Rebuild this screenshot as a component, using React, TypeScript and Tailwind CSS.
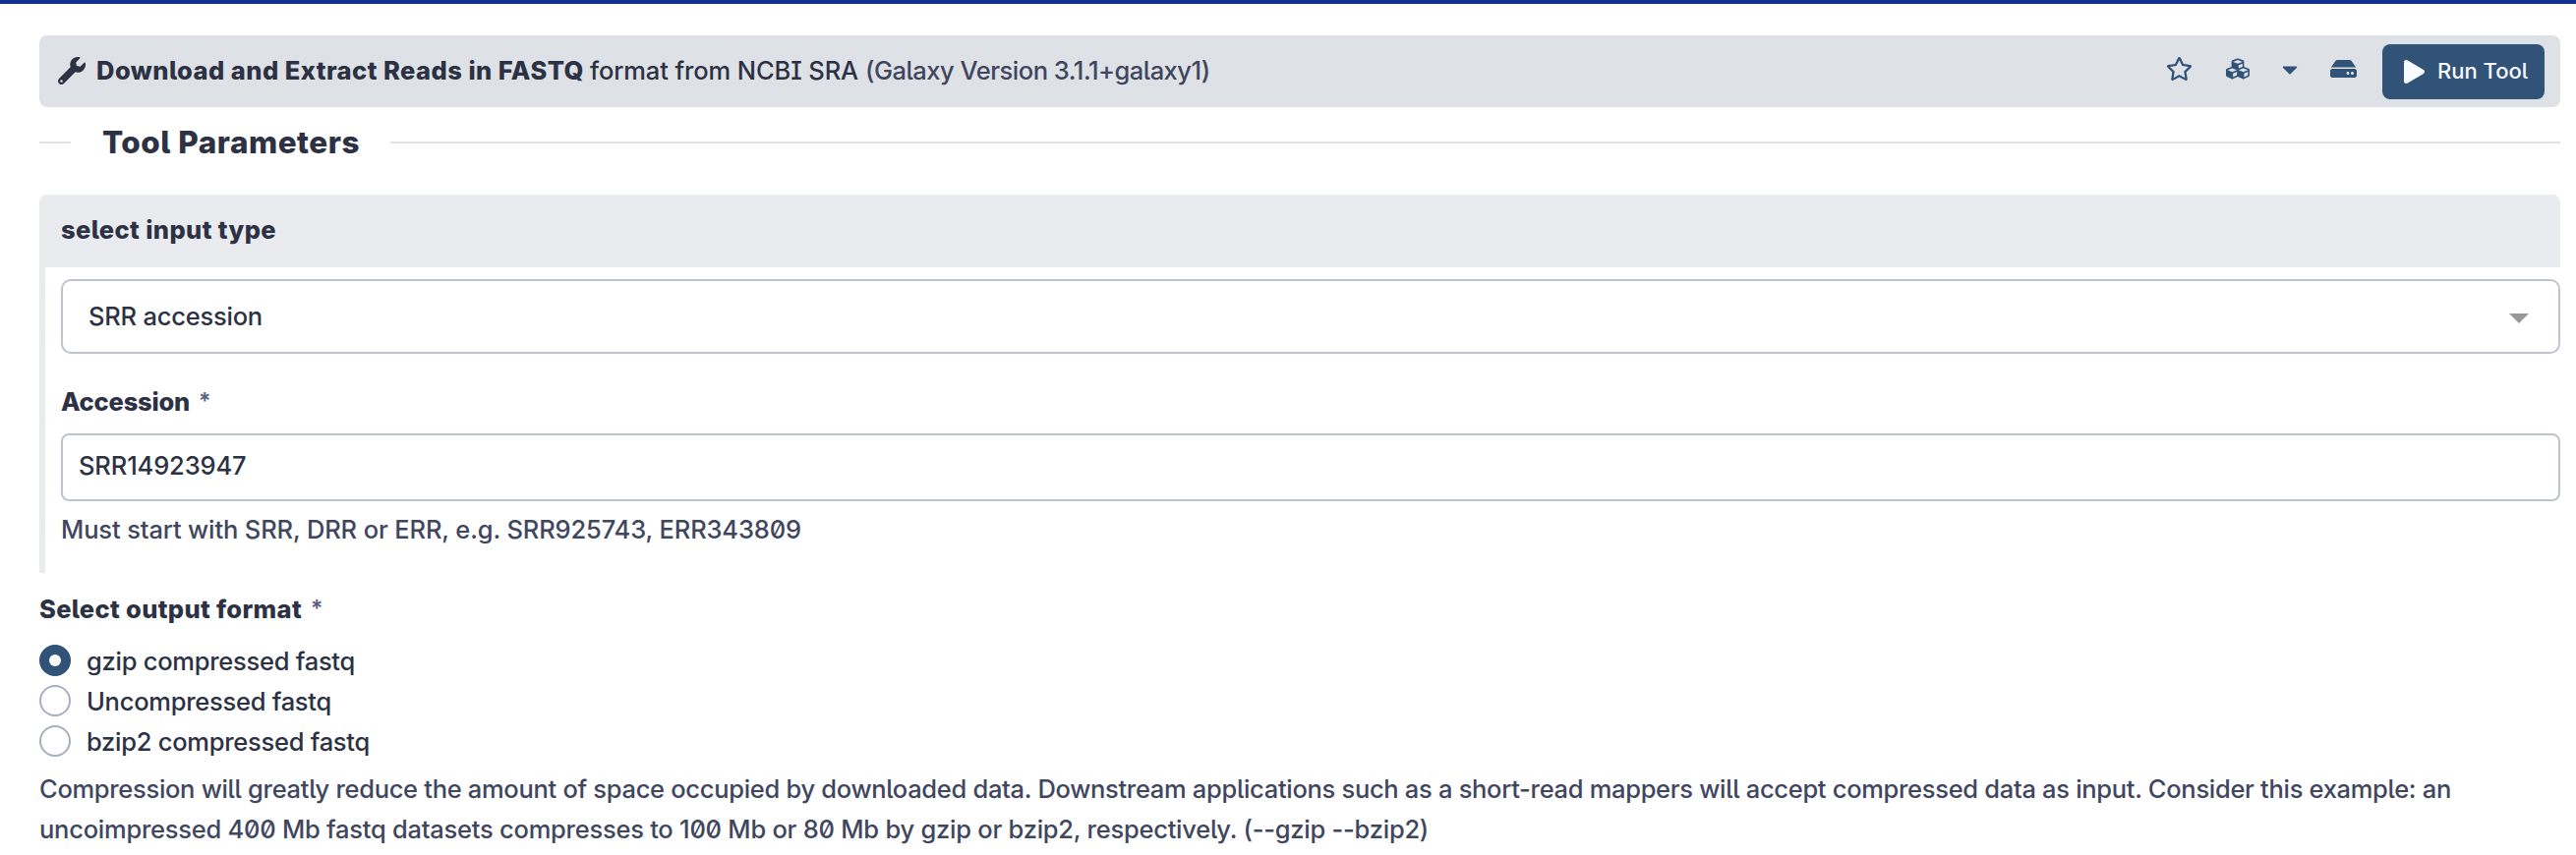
import type { ReactNode } from "react";
import { FaCaretDown, FaCubes, FaHdd, FaPlay, FaRegStar, FaWrench } from "react-icons/fa";

function ToolHeader() {
  return (
    <header className="mt-8 flex h-[73px] items-center rounded-lg bg-[#dee1e6] pr-4 pl-[19px]">
      <FaWrench className="mb-0.5 h-7 w-7 shrink-0 text-[#2c3143]" />
      <h1 className="mb-0.5 flex pl-[11px] leading-[41px] whitespace-nowrap">
        <b className="font-extrabold tracking-[0.466px]">Download and Extract Reads in FASTQ</b>
        <span className="ml-1.5 tracking-[-0.11px]">format from NCBI SRA</span>
        <span className="ml-[7px] tracking-[-0.49px] text-[#41465f]">(Galaxy Version 3.1.1+galaxy1)</span>
      </h1>
      <div className="ml-auto flex items-center text-[#305377]">
        <div className="mb-[5px] flex items-center">
          <FaRegStar className="h-6 w-[27px]" />
          <FaCubes className="ml-[34px] h-6 w-6" />
          <FaCaretDown className="ml-[33px] h-[25px] w-4" />
          <FaHdd className="ml-[33px] h-6 w-[27px]" />
        </div>
        <button className="ml-[26px] flex h-14 w-[165px] items-center rounded-lg bg-[#305377] pl-[22px] text-[22px] text-[#f8faff]">
          <FaPlay className="h-6 w-[21px]" />
          <span className="ml-[13px]">Run Tool</span>
        </button>
      </div>
    </header>
  );
}

function Label({ children }: { children: ReactNode }) {
  return (
    <div className="flex leading-[41px] whitespace-nowrap">
      {children}
      <span className="ml-[9px] text-[23px] font-semibold text-[#565c83]">*</span>
    </div>
  );
}

function Radio({ label, checked = false }: { label: string; checked?: boolean }) {
  return (
    <label className="flex h-[41px] items-start leading-[41px]">
      <span
        className={
          checked
            ? "mt-1 flex h-8 w-8 items-center justify-center rounded-full bg-[#305377]"
            : "mt-1 h-8 w-8 rounded-full border-2 border-[#a5afbd] bg-white"
        }
      >
        {checked && <span className="h-3 w-3 rounded-full bg-white" />}
      </span>
      <span className="ml-4 tracking-[-0.265px]">{label}</span>
    </label>
  );
}

export default function App() {
  return (
    <div className="h-[870px] overflow-hidden border-t-4 border-[#132f8f] bg-white pr-4 pl-10 font-['Inter',sans-serif] text-[25.5px] font-medium text-[#2c3143] [font-feature-settings:'zero','cv05','cv08']">
      <ToolHeader />

      <div className="flex h-[72px] items-center">
        <div className="h-0.5 w-8 bg-[#dee1e6]" />
        <h2 className="ml-8 w-[293px] text-[31.5px] leading-10 font-extrabold tracking-[0.49px] whitespace-nowrap">Tool Parameters</h2>
        <div className="h-0.5 flex-1 bg-[#dee1e6]" />
      </div>

      <section className="mt-[17px]">
        <div className="flex h-[74px] items-center rounded-t-lg bg-[#eaebef] pl-[22px] font-extrabold tracking-[0.395px]">
          <span className="mb-px">select input type</span>
        </div>
        <div className="h-[311px] border-l-6 border-[#eaebef] pt-3 pl-4">
          <div className="flex h-[76px] items-center justify-between rounded-[10px] border-2 border-[#bfc3cf] pr-[30px] pl-[26px]">
            <span className="tracking-[-0.22px]">SRR accession</span>
            <svg viewBox="0 0 20 10" className="mt-1 h-2.5 w-5 fill-[#999999]">
              <path d="M0 0h20L10 10z" />
            </svg>
          </div>
          <div className="mt-7">
            <Label>
              <b className="font-extrabold tracking-[-0.21px]">Accession</b>
            </Label>
          </div>
          <div className="mt-3 flex h-[69px] items-center rounded-lg border-2 border-[#bfc3cf] pl-4 tracking-[-0.13px]">
            <span className="mb-0.5">SRR14923947</span>
          </div>
          <p className="mt-2 leading-[41px] tracking-[-0.136px] text-[#41465f]">
            Must start with SRR, DRR or ERR, e.g. SRR925743, ERR343809
          </p>
        </div>
      </section>

      <section className="pt-4">
        <Label>
          <b className="font-extrabold tracking-[0.345px]">Select output format</b>
        </Label>
        <div className="mt-3">
          <Radio label="gzip compressed fastq" checked />
          <Radio label="Uncompressed fastq" />
          <Radio label="bzip2 compressed fastq" />
        </div>
        <p className="mt-[7px] leading-[41px] whitespace-nowrap text-[#41465f]">
          <span className="block tracking-[-0.305px]">
            Compression will greatly reduce the amount of space occupied by downloaded data. Downstream applications such as a short-read mappers will accept compressed data as input. Consider this example: an
          </span>
          <span className="block tracking-[-0.248px]">
            uncoimpressed 400 Mb fastq datasets compresses to 100 Mb or 80 Mb by gzip or bzip2, respectively. (--gzip --bzip2)
          </span>
        </p>
      </section>
    </div>
  );
}
